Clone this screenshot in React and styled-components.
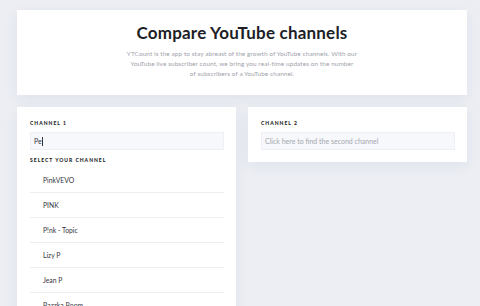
import styled, { createGlobalStyle } from 'styled-components';

const GlobalStyle = createGlobalStyle`
  html, body {
    margin: 0;
    padding: 0;
    overflow: hidden;
    background-color: #eceef4;
    font-family: Lato, "Open Sans", sans-serif;
  }
`;

const Page = styled.div`
  padding: 10px 13px 0 17px;
  height: 306px;
  box-sizing: border-box;
`;

const HeaderCard = styled.section`
  background-color: #ffffff;
  height: 85px;
  box-sizing: border-box;
  padding-top: 12px;
  text-align: center;
  box-shadow: 0 4px 14px rgba(40, 50, 90, 0.06);
`;

const Title = styled.h1`
  margin: 0;
  font-size: 17px;
  line-height: 22px;
  font-weight: 700;
  color: #1d1e26;
  letter-spacing: 0.2px;
`;

const Intro = styled.p`
  margin: 5px auto 0;
  font-size: 6.4px;
  line-height: 10px;
  color: #a0a2ab;
  letter-spacing: 0.1px;
`;

const Columns = styled.div`
  display: grid;
  grid-template-columns: 219px 219px;
  gap: 12px;
  margin-top: 12px;
  align-items: start;
`;

const Card = styled.section`
  background-color: #ffffff;
  padding: 12px 12px 12px 13px;
  box-shadow: 0 4px 14px rgba(40, 50, 90, 0.06);
`;

const Label = styled.div`
  font-size: 5px;
  line-height: 8px;
  font-weight: 900;
  letter-spacing: 1px;
  color: #1d1e26;
  text-transform: uppercase;
  margin-top: ${(props) => props.gap || 0}px;
`;

const Field = styled.div`
  margin-top: 5px;
  height: 18px;
  box-sizing: border-box;
  border: 1px solid #eef0f5;
  background-color: #f7f8fb;
  padding-left: 3px;
  display: flex;
  align-items: center;
  font-size: 7px;
  color: ${(props) => (props.placeholder ? '#a4a7b0' : '#33343c')};
`;

const Caret = styled.span`
  display: inline-block;
  width: 1px;
  height: 9px;
  background-color: #33343c;
  margin-left: 0.5px;
`;

const List = styled.ul`
  list-style: none;
  margin: 4px 0 0;
  padding: 0;
`;

const Item = styled.li`
  height: 25px;
  box-sizing: border-box;
  border-bottom: 1px solid #eceef2;
  padding-left: 13px;
  display: flex;
  align-items: center;
  font-size: 6.8px;
  color: #34353d;
`;

const channels = ['PinkVEVO', 'PINK', 'P!nk - Topic', 'Lizy P', 'Jean P', 'Bazzka Boom'];

export default function App() {
  return (
    <>
      <GlobalStyle />
      <Page>
        <HeaderCard>
          <Title>Compare YouTube channels</Title>
          <Intro>
            YTCount is the app to stay abreast of the growth of YouTube channels. With our
            <br />
            YouTube live subscriber count, we bring you real-time updates on the number
            <br />
            of subscribers of a YouTube channel.
          </Intro>
        </HeaderCard>
        <Columns>
          <Card>
            <Label>Channel 1</Label>
            <Field>
              Pe<Caret />
            </Field>
            <Label gap={6}>Select your channel</Label>
            <List>
              {channels.map((name) => (
                <Item key={name}>{name}</Item>
              ))}
            </List>
          </Card>
          <Card>
            <Label>Channel 2</Label>
            <Field placeholder>Click here to find the second channel</Field>
          </Card>
        </Columns>
      </Page>
    </>
  );
}
